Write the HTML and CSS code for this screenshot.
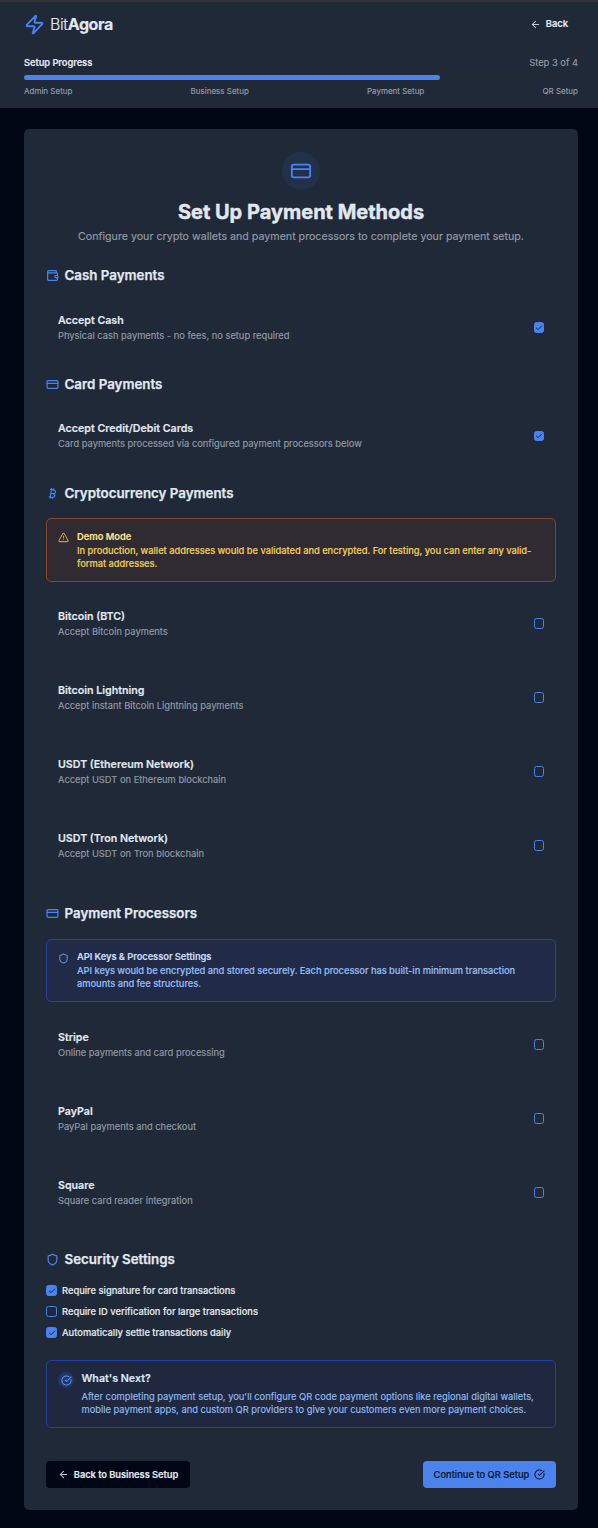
FILE: index.html
```html
<!DOCTYPE html>
<html lang="en">
<head>
<meta charset="utf-8">
<title>BitAgora – Payment Setup</title>
<link rel="stylesheet" href="styles.css">
</head>
<body>
<svg class="defs" width="0" height="0">
  <symbol id="card" viewBox="0 0 24 24"><rect width="20" height="14" x="2" y="5" rx="2"/><path d="M2 10h20"/></symbol>
  <symbol id="shield" viewBox="0 0 24 24"><path d="M20 13c0 5-3.500 7.500-7.660 8.950a1 1 0 0 1-.67-.01C7.500 20.500 4 18 4 13V6a1 1 0 0 1 1-1c2 0 4.500-1.200 6.240-2.720a1.170 1.170 0 0 1 1.520 0C14.510 3.810 17 5 19 5a1 1 0 0 1 1 1z"/></symbol>
  <symbol id="arrow" viewBox="0 0 24 24"><path d="m12 19-7-7 7-7M19 12H5"/></symbol>
  <symbol id="done" viewBox="0 0 24 24"><path d="M21.800 10A10 10 0 1 1 17 3.335M9 11l3 3L22 4"/></symbol>
  <symbol id="tick" viewBox="0 0 24 24"><path d="M20 6 9 17l-5-5"/></symbol>
</svg>
<header class="header">
  <div class="topbar">
    <div class="brand">
      <svg class="icon bolt" viewBox="0 0 24 24"><path d="M4 14a1 1 0 0 1-.78-1.630l9.900-10.200a.5.5 0 0 1 .86.460l-1.920 6.020A1 1 0 0 0 13 10h7a1 1 0 0 1 .78 1.630l-9.900 10.200a.5.5 0 0 1-.86-.460l1.920-6.020A1 1 0 0 0 11 14z"/></svg>
      <span class="brand-name">Bit<b>Agora</b></span>
    </div>
    <div class="back"><svg class="icon"><use href="#arrow"/></svg><span>Back</span></div>
  </div>
  <div class="progress-head"><span class="progress-title">Setup Progress</span><span class="progress-step">Step 3 of 4</span></div>
  <div class="track"><div class="fill"></div></div>
  <div class="steps"><span>Admin Setup</span><span>Business Setup</span><span>Payment Setup</span><span>QR Setup</span></div>
</header>
<main class="panel">
  <div class="hero"><svg class="icon"><use href="#card"/></svg></div>
  <h1 class="title">Set Up Payment Methods</h1>
  <p class="subtitle">Configure your crypto wallets and payment processors to complete your payment setup.</p>

  <section class="cash">
    <h2 class="heading"><svg class="icon" viewBox="0 0 24 24"><path d="M19 7V4a1 1 0 0 0-1-1H5a2 2 0 0 0 0 4h15a1 1 0 0 1 1 1v4h-3a2 2 0 0 0 0 4h3a1 1 0 0 0 1-1v-2a1 1 0 0 0-1-1M3 5v14a2 2 0 0 0 2 2h15a1 1 0 0 0 1-1v-4"/></svg>Cash Payments</h2>
    <div class="item"><div><h3>Accept Cash</h3><p>Physical cash payments - no fees, no setup required</p></div><span class="check on"><svg class="icon"><use href="#tick"/></svg></span></div>
  </section>

  <section class="cards">
    <h2 class="heading"><svg class="icon"><use href="#card"/></svg>Card Payments</h2>
    <div class="item"><div><h3>Accept Credit/Debit Cards</h3><p>Card payments processed via configured payment processors below</p></div><span class="check on"><svg class="icon"><use href="#tick"/></svg></span></div>
  </section>

  <section class="crypto">
    <h2 class="heading"><svg class="icon" viewBox="0 0 24 24"><path d="M11.767 19.089c4.924.868 6.140-6.025 1.216-6.894m-1.216 6.894L5.860 18.047m5.908 1.042-.347 1.970m1.563-8.864c4.924.869 6.140-6.025 1.215-6.893m-1.215 6.893-3.940-.694m5.155-6.200L8.290 4.260m5.908 1.042.348-1.970M7.480 20.364l3.126-17.727"/></svg>Cryptocurrency Payments</h2>
    <div class="alert warn">
      <svg class="icon" viewBox="0 0 24 24"><path d="m21.730 18-8-14a2 2 0 0 0-3.480 0l-8 14A2 2 0 0 0 4 21h16a2 2 0 0 0 1.730-3M12 9v4M12 17h.01"/></svg>
      <div><h3>Demo Mode</h3><p>In production, wallet addresses would be validated and encrypted. For testing, you can enter any valid-<br>format addresses.</p></div>
    </div>
    <div class="list">
      <div class="item"><div><h3>Bitcoin (BTC)</h3><p>Accept Bitcoin payments</p></div><span class="check"></span></div>
      <div class="item"><div><h3>Bitcoin Lightning</h3><p>Accept instant Bitcoin Lightning payments</p></div><span class="check"></span></div>
      <div class="item"><div><h3>USDT (Ethereum Network)</h3><p>Accept USDT on Ethereum blockchain</p></div><span class="check"></span></div>
      <div class="item"><div><h3>USDT (Tron Network)</h3><p>Accept USDT on Tron blockchain</p></div><span class="check"></span></div>
    </div>
  </section>

  <section class="processors">
    <h2 class="heading"><svg class="icon"><use href="#card"/></svg>Payment Processors</h2>
    <div class="alert info">
      <svg class="icon"><use href="#shield"/></svg>
      <div><h3>API Keys &amp; Processor Settings</h3><p>API keys would be encrypted and stored securely. Each processor has built-in minimum transaction<br>amounts and fee structures.</p></div>
    </div>
    <div class="list">
      <div class="item"><div><h3>Stripe</h3><p>Online payments and card processing</p></div><span class="check"></span></div>
      <div class="item"><div><h3>PayPal</h3><p>PayPal payments and checkout</p></div><span class="check"></span></div>
      <div class="item"><div><h3>Square</h3><p>Square card reader integration</p></div><span class="check"></span></div>
    </div>
  </section>

  <section class="security">
    <h2 class="heading"><svg class="icon"><use href="#shield"/></svg>Security Settings</h2>
    <div class="options">
      <div class="option"><span class="check on"><svg class="icon"><use href="#tick"/></svg></span><span>Require signature for card transactions</span></div>
      <div class="option"><span class="check"></span><span>Require ID verification for large transactions</span></div>
      <div class="option"><span class="check on"><svg class="icon"><use href="#tick"/></svg></span><span>Automatically settle transactions daily</span></div>
    </div>
  </section>

  <div class="next">
    <span class="next-icon"><svg class="icon"><use href="#done"/></svg></span>
    <div><h3>What's Next?</h3><p>After completing payment setup, you'll configure QR code payment options like regional digital wallets,<br>mobile payment apps, and custom QR providers to give your customers even more payment choices.</p></div>
  </div>

  <footer class="actions">
    <div class="btn dark"><svg class="icon"><use href="#arrow"/></svg><span>Back to Business Setup</span></div>
    <div class="btn primary"><span>Continue to QR Setup</span><svg class="icon"><use href="#done"/></svg></div>
  </footer>
</main>
</body>
</html>
```
FILE: styles.css
```css
* { box-sizing: border-box; }
body { margin: 0; background: #010714; color: #e2e8f0; font-family: Inter, "Liberation Sans", sans-serif; font-size: 9.330px; min-height: 1528px; -webkit-text-stroke: .15px currentColor; }
h1, h2, h3, p { margin: 0; }
p, h1, h3, span { white-space: nowrap; }
.defs { display: block; height: 0; }
.icon { display: block; flex: none; width: 13px; height: 13px; fill: none; stroke: currentColor; stroke-width: 2.200; stroke-linecap: round; stroke-linejoin: round; }

.header { height: 108px; padding: 10px 20px 0 24px; background: #202938; border-top: 2px solid #333234; }
.topbar { display: flex; justify-content: space-between; align-items: center; height: 24px; padding-right: 10px; }
.brand { display: flex; align-items: center; gap: 5px; }
.bolt { width: 21px; height: 21px; color: #4b83ee; }
.brand-name { font-size: 16px; letter-spacing: -.4px; font-weight: 300; line-height: 24px; }
.brand-name b { font-weight: 700; }
.back { display: flex; align-items: center; gap: 5px; font-weight: 600; line-height: 14px; }
.back .icon, .dark .icon { width: 11px; height: 11px; color: #c3c9d2; }
.progress-head { display: flex; justify-content: space-between; margin: 20px 0 0; line-height: 14px; height: 14px; }
.progress-title { font-weight: 600; letter-spacing: -.06px; }
.progress-step { color: #949ba6; }
.progress-head, .track, .steps { width: 554px; }
.track { height: 5px; margin-top: 5px; border-radius: 3px; background: #212b36; }
.fill { width: 75%; height: 5px; border-radius: 3px; background: #4b83ee; }
.steps { display: flex; justify-content: space-between; margin-top: 5px; font-size: 8px; line-height: 12px; color: #949ba6; }

.panel { width: 554px; height: 1381px; margin: 21px 0 0 24px; padding: 23px 22px 0; border-radius: 5px; background: #202938; }
.hero { display: grid; place-items: center; width: 38px; height: 38px; margin: 0 auto; border-radius: 50%; background: #23304a; color: #4b83ee; }
.hero .icon { width: 22px; height: 22px; stroke-width: 2; }
.title { margin-top: 9px; text-align: center; font-size: 20px; line-height: 26px; font-weight: 700; -webkit-text-stroke-width: .4px; }
.subtitle { margin-top: 4px; text-align: center; font-size: 10.670px; line-height: 16px; color: #949ba6; }

.cash { margin-top: 20px; }
.cards, .crypto { margin-top: 18px; }
.processors { margin-top: 29px; }
.security { margin-top: 28px; }
.heading { display: flex; align-items: center; gap: 5.500px; height: 20px; font-size: 13.330px; line-height: 20px; font-weight: 600; white-space: nowrap; -webkit-text-stroke-width: .25px; }
.heading .icon { color: #4b83ee; }
.item { display: flex; justify-content: space-between; align-items: center; height: 57px; padding: 0 11px; border: 1px solid #202a36; border-radius: 5px; }
.heading + .item { margin-top: 14px; }
.item h3 { padding-top: 1px; font-size: 10.670px; line-height: 16px; font-weight: 600; }
.item p { margin-top: -1px; padding-bottom: 1px; line-height: 15px; color: #949ba6; }
.cards .item { height: 56px; margin-bottom: 19px; }
.cards .check { height: 10px; }
.check { display: grid; place-items: center; flex: none; width: 10px; height: 11px; border: 1px solid #4b83ee; border-radius: 2.500px; }
.on { background: #4b83ee; color: #14264a; }
.check .icon { width: 8px; height: 8px; stroke-width: 3; }
.list { display: grid; gap: 17px; margin-top: 13px; }

.alert { display: flex; gap: 8px; height: 64px; padding: 11px; border: 1px solid; border-radius: 5px; }
.alert .icon { width: 11px; height: 11px; margin-top: 2px; }
.alert h3 { font-size: 9.330px; line-height: 14px; font-weight: 600; }
.alert p { line-height: 13.330px; font-weight: 500; letter-spacing: -.04px; }
.warn { margin-top: 15px; background: #302b32; border-color: #8a431f; color: #f0cd58; }
.warn h3 { color: #f9e389; }
.warn .icon { color: #c99c36; }
.info { height: 63px; margin-top: 16px; padding-top: 10px; background: #212b47; border-color: #2343a4; color: #92bdf4; }
.info h3 { color: #c9ddf8; letter-spacing: -.05px; }
.info p { letter-spacing: -.05px; }
.info .icon { margin-top: 3px; color: #5b91df; }
.info + .list { margin-top: 14px; }

.options { display: grid; gap: 7px; margin-top: 15px; }
.option { display: flex; align-items: center; gap: 5px; height: 14px; line-height: 14px; font-weight: 500; }
.option .check { width: 11px; margin-bottom: 1px; }

.next { display: flex; gap: 7.500px; height: 68px; margin-top: 20px; padding: 10px 11px; border: 1px solid #2343a4; border-radius: 5px; background: #1f283e; }
.next-icon { display: grid; place-items: center; flex: none; width: 16px; height: 16px; margin-top: 1px; border-radius: 50%; background: #20366c; color: #5b91df; }
.next-icon .icon { width: 11px; height: 11px; }
.next h3 { font-size: 10.670px; line-height: 16px; font-weight: 600; color: #dbe8fa; }
.next p { margin-top: 3px; line-height: 13px; color: #92bdf4; }

.actions { display: flex; justify-content: space-between; margin-top: 33px; }
.btn { display: flex; align-items: center; justify-content: center; gap: 5px; height: 27px; border-radius: 4px; font-weight: 500; }
.dark { width: 144px; background: #010714; font-weight: 600; letter-spacing: -.05px; }
.primary { width: 133px; background: #4b83ee; color: #07142d; }
.primary .icon { width: 11px; height: 11px; }
```
